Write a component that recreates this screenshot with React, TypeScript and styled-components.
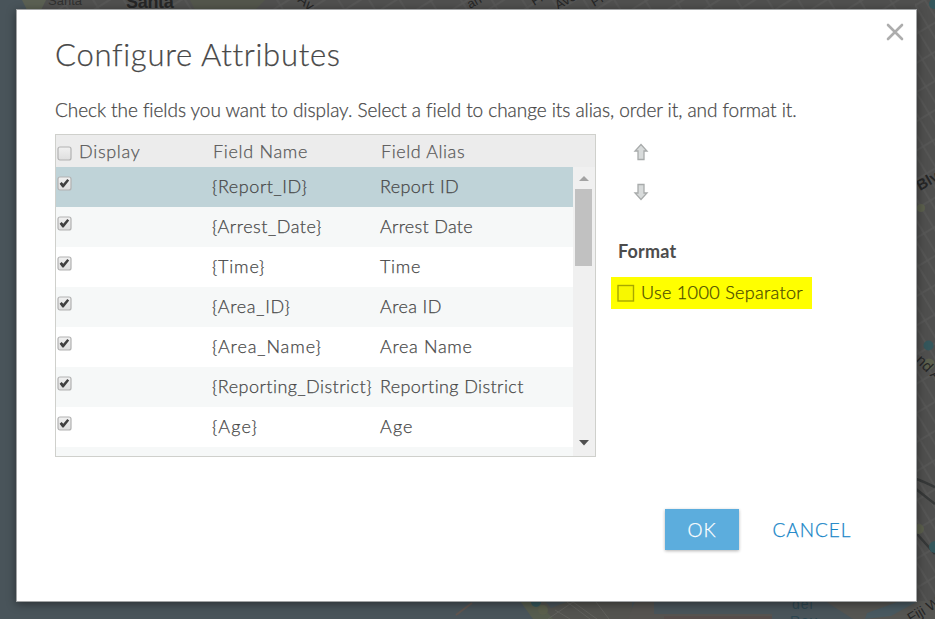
import React from 'react';
import styled, { createGlobalStyle, css } from 'styled-components';

const GlobalStyle = createGlobalStyle`
  *, *::before, *::after { box-sizing: border-box; }
  body { margin: 0; overflow: hidden; background: #49545a; }
`;

const Screen = styled.div`
  position: relative;
  width: 935px;
  height: 619px;
  padding: 9px 18px 17px 16px;
  overflow: hidden;
  font-family: Lato, "Liberation Sans", sans-serif;
  font-weight: 300;
  color: #484848;
`;

const MapCanvas = styled.svg`
  position: absolute;
  inset: 0;
  width: 935px;
  height: 619px;
`;

const Dialog = styled.section`
  position: relative;
  width: 901px;
  height: 593px;
  padding: 0 12px 0 38px;
  border: 1px solid #a2a4a5;
  background: #fff;
  box-shadow: 0 2px 9px rgba(0, 0, 0, 0.42);
  -webkit-text-stroke: 0.25px currentColor;
`;

const Header = styled.header`
  display: flex;
  justify-content: space-between;
  align-items: flex-start;
  height: 87px;
`;

const tracked = css<{ $track?: number }>`
  letter-spacing: ${({ $track = 0 }) => $track}px;
`;

const Title = styled.h1`
  margin: 24px 0 0;
  font-size: 31px;
  font-weight: 300;
  line-height: 40px;
  letter-spacing: 0.72px;
`;

const CloseButton = styled.button`
  display: flex;
  margin-top: 13px;
  padding: 0;
  border: 0;
  background: none;
`;

const Instructions = styled.p`
  margin: 0;
  height: 37px;
  font-size: 19px;
  line-height: 26px;
  letter-spacing: -0.05px;
  white-space: nowrap;
`;

const Body = styled.div`
  display: flex;
  align-items: flex-start;
`;

const Table = styled.div`
  display: flex;
  flex-direction: column;
  width: 541px;
  height: 323px;
  border: 1px solid #cfd0cc;
  font-size: 18px;
`;

const columns = css`
  display: grid;
  grid-template-columns: 156px 168px 1fr;
`;

const TableHead = styled.div`
  ${columns}
  flex: none;
  height: 32px;
  background: #ececec;
  line-height: 33px;
  color: #585858;
`;

const HeadCell = styled.span`
  ${tracked}
  display: flex;
  align-items: center;
  gap: 7px;
  padding-left: 1px;

  svg { margin-top: 3px; }
`;

const Scroller = styled.div`
  display: flex;
  flex: 1;
  min-height: 0;
`;

const Rows = styled.div`
  flex: 1;
  overflow: hidden;
`;

const Row = styled.div<{ $selected?: boolean }>`
  ${columns}
  height: 40px;
  line-height: 38px;
  background: ${({ $selected }) => ($selected ? '#bfd3d8' : '#fff')};
  &:nth-child(even) { background: #f6f8f8; }
`;

const Cell = styled.span`
  ${tracked}
  white-space: nowrap;
`;

const CheckCell = styled.span`
  padding: 9px 0 0 1px;
  line-height: 0;
`;

const ScrollTrack = styled.div`
  display: flex;
  flex-direction: column;
  align-items: center;
  width: 22px;
  padding: 9px 1px 10px 0;
  background: #f0f0f0;
`;

const ScrollThumb = styled.div`
  width: 17px;
  height: 77px;
  margin: 8px 0 auto;
  background: #c1c1c1;
`;

const SidePanel = styled.aside`
  display: flex;
  flex-direction: column;
  align-items: flex-start;
  padding: 9px 0 0 15px;
`;

const OrderButton = styled.button`
  display: flex;
  height: 20px;
  margin: 0 0 20px 22px;
  padding: 0;
  border: 0;
  background: none;
`;

const PanelTitle = styled.h2`
  margin: 16px 0 14px 7px;
  font-size: 18px;
  font-weight: 700;
  line-height: 24px;
  letter-spacing: 0.2px;
  color: #4c4c4c;
  -webkit-text-stroke: 0;
`;

const SeparatorOption = styled.label`
  display: flex;
  align-items: center;
  gap: 6px;
  width: 201px;
  height: 32px;
  padding-left: 6px;
  background: #ff0;
  color: #4c4c00;
  font-size: 18px;
  letter-spacing: 0.33px;
  line-height: 30px;
  white-space: nowrap;
`;

const OptionText = styled.span`
  height: 32px;
`;

const Footer = styled.footer`
  display: flex;
  margin: 52px 0 0 610px;
`;

const Button = styled.button<{ $primary?: boolean }>`
  width: ${({ $primary }) => ($primary ? 74 : 146)}px;
  height: 41px;
  padding: 0 0 1px;
  border: 0;
  background: ${({ $primary }) => ($primary ? '#5caddd' : 'transparent')};
  box-shadow: ${({ $primary }) => ($primary ? '0 1px 3px rgba(0,0,0,.3)' : 'none')};
  color: ${({ $primary }) => ($primary ? '#fff' : '#1585c7')};
  font: 300 19px Lato, sans-serif;
  letter-spacing: 0.95px;
  -webkit-text-stroke: 0.25px currentColor;
`;

const Checkbox = ({ checked = false }: { checked?: boolean }) => (
  <svg width="15" height="15" viewBox="0 0 15 15" role="checkbox" aria-checked={checked}>
    <defs>
      <linearGradient id="box" x2="0" y2="1">
        <stop stopColor="#f1f1f1" />
        <stop offset="1" stopColor="#dedede" />
      </linearGradient>
    </defs>
    <rect x="1" y="1" width="13" height="13" rx="2" fill="url(#box)" stroke="#b2b2b2" strokeWidth="1.2" />
    {checked && <path d="M2.6 7.8 4.6 5.9l1.7 1.9 4-4.9L12.2 4.5 6.6 11.4H5.4Z" fill="#404040" />}
  </svg>
);

const Arrow = ({ down = false }: { down?: boolean }) => (
  <svg width="16" height="18" viewBox="0 0 16 18">
    <path
      d={down ? 'M5 1.5h6V10h3L8 16.5 2 10h3Z' : 'M8 1.5 14 8h-3v8.5H5V8H2Z'}
      fill="#d8dbdb" stroke="#a8abab" strokeWidth="1.3"
    />
  </svg>
);

type Field = { name: string; nameTrack: number; alias: string; aliasTrack: number };

const fields: Field[] = [
  { name: '{Report_ID}', nameTrack: 0.58, alias: 'Report ID', aliasTrack: 0.4 },
  { name: '{Arrest_Date}', nameTrack: 0.55, alias: 'Arrest Date', aliasTrack: 0.3 },
  { name: '{Time}', nameTrack: 0.8, alias: 'Time', aliasTrack: 0.7 },
  { name: '{Area_ID}', nameTrack: 0.72, alias: 'Area ID', aliasTrack: 0.4 },
  { name: '{Area_Name}', nameTrack: 0.93, alias: 'Area Name', aliasTrack: 0.68 },
  { name: '{Reporting_District}', nameTrack: 0.48, alias: 'Reporting District', aliasTrack: 0.4 },
  { name: '{Age}', nameTrack: 1.2, alias: 'Age', aliasTrack: 1.1 },
  { name: '', nameTrack: 0, alias: '', aliasTrack: 0 },
];

const MapBackdrop = () => (
  <MapCanvas viewBox="0 0 935 619" aria-hidden="true">
    <defs>
      <pattern id="streets" width="26" height="19" patternUnits="userSpaceOnUse" patternTransform="rotate(-32)">
        <rect width="26" height="19" fill="#50504f" />
        <path d="M0 1h26M1 0v19" stroke="#595958" strokeWidth="1.3" />
      </pattern>
      <pattern id="blocks" width="11" height="25" patternUnits="userSpaceOnUse" patternTransform="rotate(-31)">
        <rect width="11" height="25" fill="#4f4f4e" />
        <path d="M0 1h11M1 0v25" stroke="#585857" strokeWidth="1.4" />
      </pattern>
    </defs>
    <rect width="935" height="619" fill="#49545a" />
    <path d="M23 0H935V10H28Z" fill="url(#streets)" />
    <path d="M22 0H46L41 10H27Z" fill="#5b6053" />
    <path d="M190 0h75l-10 10h-60z" fill="#53564c" />
    <path d="M915 0h20v619h-20z" fill="url(#blocks)" />
    <path d="M520 601h25l6 7 18-7h63v18h-92z" fill="#53534f" />
    <path d="M520 601h18l15 18h-20z" fill="#565c4e" />
    <path d="m548 619 25-17 24 17m-42-9 15 9m-3-17 23 17m6-17 13 17" fill="none" stroke="#61615d" />
    <path d="M635 601h19v13h118v5H628z" fill="#555350" />
    <path d="M664 616h108v3H664z" fill="#564d4b" />
    <path d="M825 601h110v18H853z" fill="#555552" />
    <path d="m867 613 33-12h18l-27 15-26 3z" fill="#495960" />
    <path d="m456 615 16-12" stroke="#605550" strokeWidth="2" />
    <path d="M916 479c7 2 12 5 19 8m-19 2 19 15m-18 30 18 20" fill="none" stroke="#363838" strokeWidth="2.5" />
    <g fill="#34565b">
      <circle cx="934" cy="4" r="5" />
      <circle cx="928.5" cy="345.5" r="5" />
      <circle cx="935" cy="547" r="6" />
      <circle cx="536" cy="602" r="5" />
    </g>
    <g fill="#5b5f4d">
      <circle cx="929" cy="364" r="5.5" />
      <circle cx="919" cy="529" r="5" />
      <circle cx="543" cy="610" r="5" />
      <circle cx="921" cy="208" r="4" />
    </g>
    <g fontFamily="Liberation Sans, sans-serif" fill="#262626">
      <text x="48" y="5" fontSize="13" fill="#303030">Santa</text>
      <text x="126" y="8" fontSize="18" fontWeight="700" letterSpacing="-.3">Santa</text>
      <text transform="translate(297 1) rotate(40)" fontSize="14">Av</text>
      <text transform="translate(470 9) rotate(-30)" fontSize="13">an</text>
      <text transform="translate(534 6) rotate(-30)" fontSize="13">Fl</text>
      <text transform="translate(558 10) rotate(-30)" fontSize="13">Ave</text>
      <text transform="translate(594 7) rotate(-30)" fontSize="13">Pl</text>
      <text transform="translate(920 191) rotate(-30)" fontSize="15" fontWeight="700">Blvd</text>
      <text transform="translate(915 361) rotate(45)" fontSize="15">nd Av</text>
      <text transform="translate(911 623) rotate(-31)" fontSize="14">Fiji Way</text>
      <text x="792" y="609" fontSize="14" letterSpacing="1" fill="#2d4650">del</text>
      <text x="790" y="626" fontSize="14" letterSpacing="1" fill="#2d4650">Rey</text>
    </g>
  </MapCanvas>
);

export default function App() {
  return (
    <Screen>
      <GlobalStyle />
      <MapBackdrop />
      <Dialog role="dialog">
        <Header>
          <Title>Configure Attributes</Title>
          <CloseButton aria-label="Close">
            <svg width="18" height="18" viewBox="0 0 18 18">
              <path d="m2 2 14 14M16 2 2 16" stroke="#adadad" strokeWidth="2.6" strokeLinecap="round" />
            </svg>
          </CloseButton>
        </Header>
        <Instructions>
          Check the fields you want to display. Select a field to change its alias, order it, and format it.
        </Instructions>
        <Body>
          <Table>
            <TableHead>
              <HeadCell $track={0.7}><Checkbox />Display</HeadCell>
              <HeadCell $track={0.7}>Field Name</HeadCell>
              <HeadCell $track={0.58}>Field Alias</HeadCell>
            </TableHead>
            <Scroller>
              <Rows>
                {fields.map((field, index) => (
                  <Row key={index} $selected={index === 0}>
                    <CheckCell><Checkbox checked /></CheckCell>
                    <Cell $track={field.nameTrack}>{field.name}</Cell>
                    <Cell $track={field.aliasTrack}>{field.alias}</Cell>
                  </Row>
                ))}
              </Rows>
              <ScrollTrack>
                <svg width="10" height="5"><path d="m0 5 5-5 5 5Z" fill="#a3a3a3" /></svg>
                <ScrollThumb />
                <svg width="10" height="6"><path d="m0 0 5 5.5L10 0Z" fill="#505050" /></svg>
              </ScrollTrack>
            </Scroller>
          </Table>
          <SidePanel>
            <OrderButton aria-label="Move up"><Arrow /></OrderButton>
            <OrderButton aria-label="Move down"><Arrow down /></OrderButton>
            <PanelTitle>Format</PanelTitle>
            <SeparatorOption>
              <svg width="18" height="18" viewBox="0 0 18 18">
                <rect x="1" y="1.5" width="15.5" height="15.5" fill="#f8f800" stroke="#a8a800" strokeWidth="1.4" />
              </svg>
              <OptionText>Use 1000 Separator</OptionText>
            </SeparatorOption>
          </SidePanel>
        </Body>
        <Footer>
          <Button $primary>OK</Button>
          <Button>CANCEL</Button>
        </Footer>
      </Dialog>
    </Screen>
  );
}
